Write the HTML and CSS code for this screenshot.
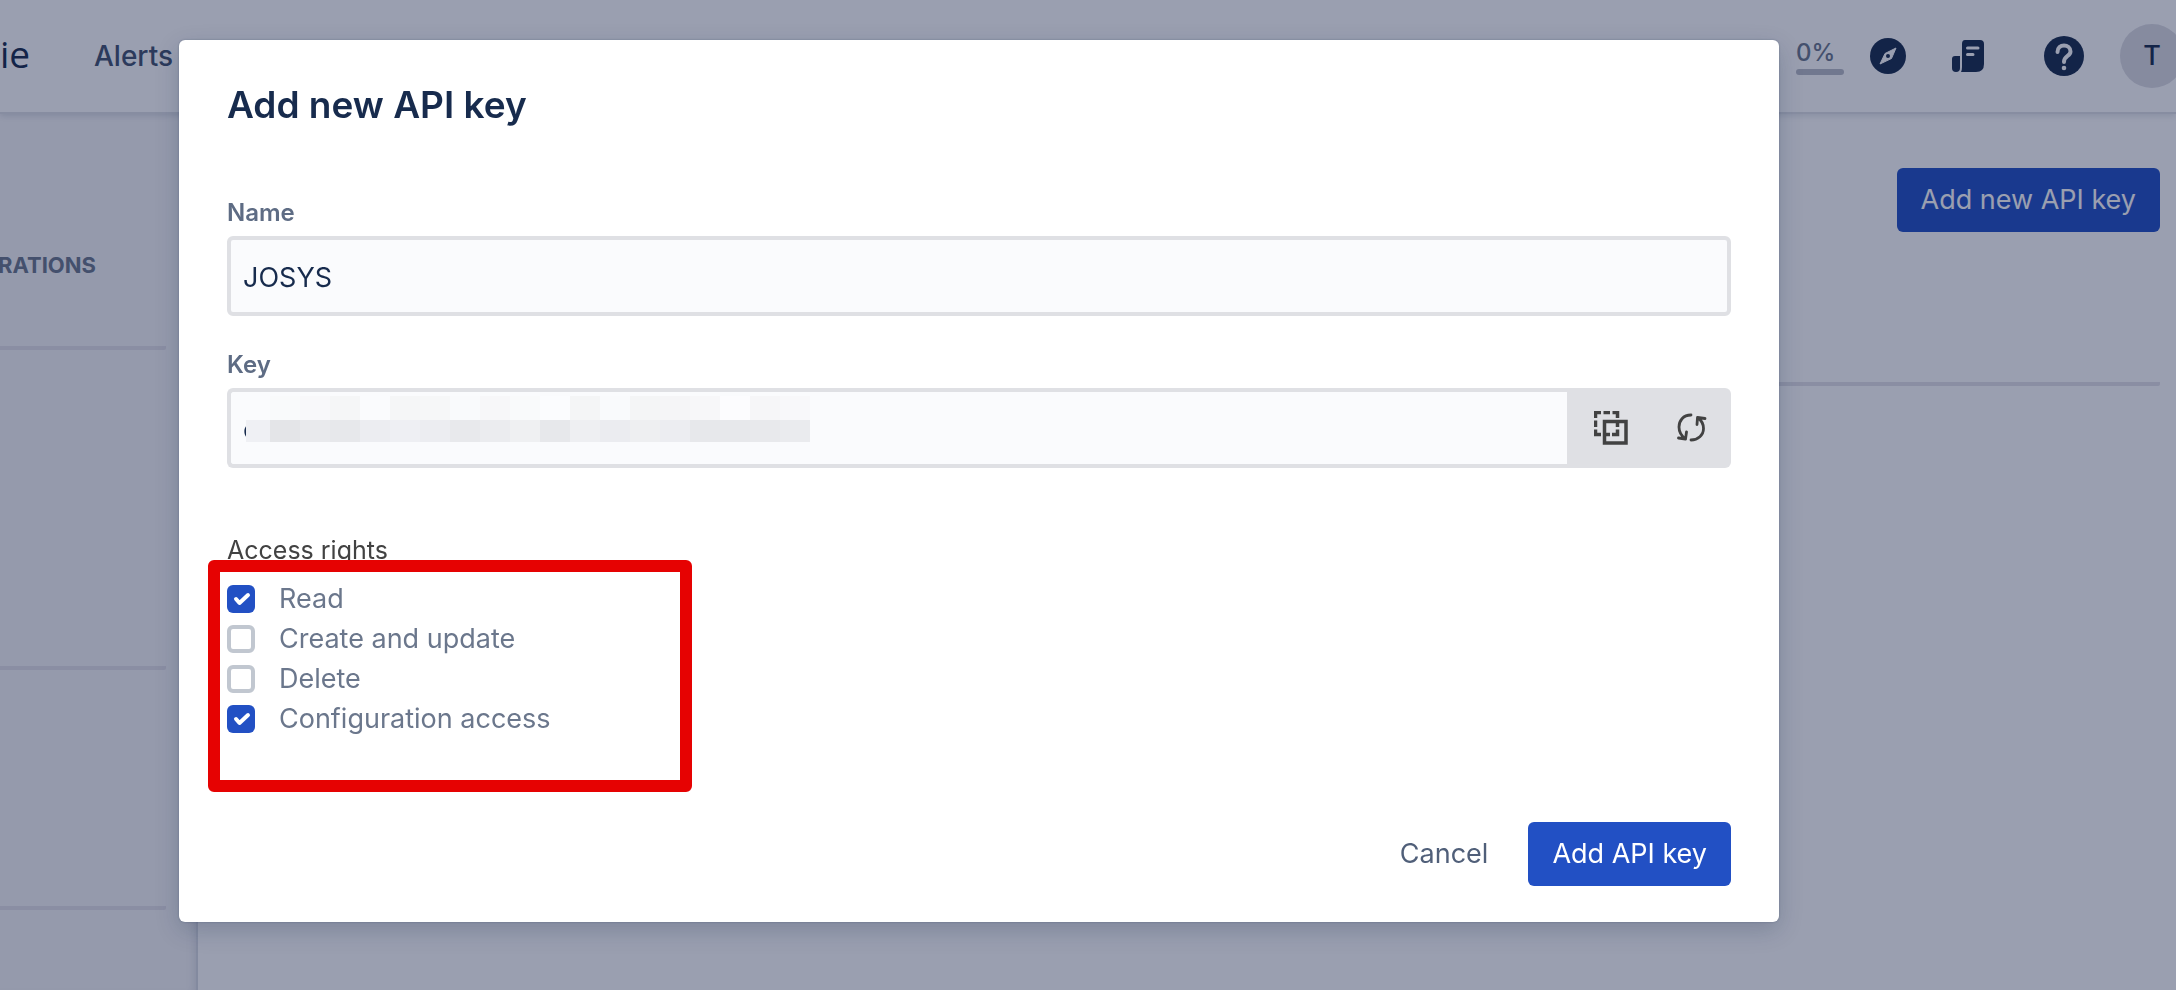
FILE: index.html
```html
<!DOCTYPE html>
<html lang="en">
<head>
    <meta charset="UTF-8">
    <meta name="viewport" content="width=device-width, initial-scale=1.0">
    <title>Add new API key</title>
    <link rel="stylesheet" href="styles.css">
</head>
<body>
    <!-- Top navigation -->
    <header class="header">
        <span class="logo">ie</span>
        <a href="#" class="nav-link">Alerts</a>
        <div class="header-actions">
            <div class="progress">
                <span class="progress-value">0%</span>
                <span class="progress-bar"></span>
            </div>
            <button class="icon-button" aria-label="Explore">
                <svg width="36" height="36" viewBox="0 0 36 36">
                    <circle cx="18" cy="18" r="18" fill="#172b4d"/>
                    <path d="M26 10 L21.5 20.5 L10 26 L15 15.5 Z" fill="#fff" stroke="#fff" stroke-width="1" stroke-linejoin="round"/>
                    <circle cx="18" cy="18" r="2" fill="#172b4d"/>
                </svg>
            </button>
            <button class="icon-button news" aria-label="What's new">
                <svg width="32" height="32" viewBox="0 0 32 32">
                    <path d="M13 0 H28 Q32 0 32 4 V24 Q32 32 24 32 H9 Q10 30 10 27 V4 Q10 0 13 0 Z" fill="#172b4d"/>
                    <path d="M3 16 H8 V28 Q8 32 4 32 Q0 32 0 28 V19 Q0 16 3 16 Z" fill="#172b4d"/>
                    <path d="M15.500 8 H26 M15.500 14.500 H21" stroke="#fff" stroke-width="3" stroke-linecap="round"/>
                </svg>
            </button>
            <button class="icon-button help" aria-label="Help">
                <svg width="40" height="40" viewBox="0 0 40 40" fill="none">
                    <circle cx="20" cy="20" r="20" fill="#172b4d"/>
                    <path d="M13.500 16 C13.500 7 26.500 7.500 26.500 15.500 C26.500 20.500 20 19.500 20 26" stroke="#fff" stroke-width="4" stroke-linecap="round"/>
                    <circle cx="20" cy="32" r="2.300" fill="#fff"/>
                </svg>
            </button>
            <button class="avatar">T</button>
        </div>
    </header>

    <div class="page">
        <aside class="sidebar">
            <div class="sidebar-section first">
                <h2 class="sidebar-title">RATIONS</h2>
            </div>
            <div class="sidebar-section second"></div>
            <div class="sidebar-section third"></div>
        </aside>
        <main class="content">
            <div class="content-header">
                <button class="button primary">Add new API key</button>
            </div>
        </main>
    </div>

    <!-- Add key dialog -->
    <div class="overlay">
        <form class="modal" role="dialog" aria-labelledby="modalTitle">
            <h1 id="modalTitle" class="modal-title">Add new API key</h1>

            <div class="field">
                <label class="field-label" for="name">Name</label>
                <input class="text-input" id="name" type="text" value="JOSYS">
            </div>

            <div class="field">
                <label class="field-label" for="key">Key</label>
                <div class="key-row">
                    <input class="text-input" id="key" type="text" value="c" readonly>
                    <svg class="key-mask" width="570" height="46" viewBox="0 0 570 46" shape-rendering="crispEdges" aria-hidden="true">
                        <g>
                            <rect x="30" width="30" height="24" fill="#f9fafb"/>
                            <rect x="60" width="30" height="24" fill="#f8f8fa"/>
                            <rect x="90" width="30" height="24" fill="#f5f6f7"/>
                            <rect x="150" width="30" height="24" fill="#f5f6f7"/>
                            <rect x="180" width="30" height="24" fill="#f6f7f8"/>
                            <rect x="210" width="30" height="24" fill="#f9fafc"/>
                            <rect x="240" width="30" height="24" fill="#f7f7f9"/>
                            <rect x="270" width="30" height="24" fill="#f9fafb"/>
                            <rect x="300" width="30" height="24" fill="#fbfcfe"/>
                            <rect x="330" width="30" height="24" fill="#f4f5f6"/>
                            <rect x="360" width="30" height="24" fill="#f9fafc"/>
                            <rect x="390" width="30" height="24" fill="#f4f5f6"/>
                            <rect x="420" width="30" height="24" fill="#f5f5f7"/>
                            <rect x="450" width="30" height="24" fill="#f7f7f9"/>
                            <rect x="480" width="30" height="24" fill="#fcfcfe"/>
                            <rect x="510" width="30" height="24" fill="#f6f6f8"/>
                            <rect x="540" width="30" height="24" fill="#f8f8fa"/>
                        </g>
                        <g transform="translate(0 24)">
                            <rect x="6" width="24" height="22" fill="#eff0f4"/>
                            <rect x="30" width="30" height="22" fill="#e4e5e8"/>
                            <rect x="60" width="30" height="22" fill="#e9eaed"/>
                            <rect x="90" width="30" height="22" fill="#e7e8eb"/>
                            <rect x="120" width="30" height="22" fill="#ecedf1"/>
                            <rect x="150" width="30" height="22" fill="#eeeff3"/>
                            <rect x="180" width="30" height="22" fill="#ecedf1"/>
                            <rect x="210" width="30" height="22" fill="#e8e9ec"/>
                            <rect x="240" width="30" height="22" fill="#ebecef"/>
                            <rect x="270" width="30" height="22" fill="#eff0f2"/>
                            <rect x="300" width="30" height="22" fill="#e7e8eb"/>
                            <rect x="330" width="30" height="22" fill="#eeeff2"/>
                            <rect x="360" width="30" height="22" fill="#ebecf0"/>
                            <rect x="390" width="30" height="22" fill="#eeeff1"/>
                            <rect x="420" width="30" height="22" fill="#ecedf1"/>
                            <rect x="450" width="60" height="22" fill="#e7e8eb"/>
                            <rect x="510" width="30" height="22" fill="#e8e9ec"/>
                            <rect x="540" width="30" height="22" fill="#eaebee"/>
                        </g>
                    </svg>
                    <div class="key-actions">
                        <button type="button" class="icon-button" aria-label="Copy key">
                            <svg width="34" height="34" viewBox="0 0 34 34" fill="none" stroke="#424242" stroke-width="3.500">
                                <path d="M1.500 7 V1.500 H7 M9.500 1.500 H16 M18.500 1.500 H23.500 V7 M1.500 9.500 V16 M1.500 18.500 V23.500 H7 M18 23.500 H23.500 V18.500 M11.500 23.500 H16 M23.500 10 V16"/>
                                <path d="M10.500 10.500 H32 V32 H10.500 Z"/>
                            </svg>
                        </button>
                        <button type="button" class="icon-button" aria-label="Regenerate key">
                            <svg width="30" height="30" viewBox="0 0 30 30" fill="none" stroke="#424242" stroke-width="2.800" stroke-linecap="round" stroke-linejoin="round">
                                <path d="M14 2 C6 2 2 8 2 14 C2 19 4.500 23 8.500 26 M1.500 25 L8.500 26 L9.500 19"/>
                                <path d="M14 27 C21 27 26.500 22 26.500 15.500 C26.500 11 24 7 20.500 4.500 M28 5.500 L20.500 4.500 L20 11.500"/>
                            </svg>
                        </button>
                    </div>
                </div>
            </div>

            <fieldset class="rights">
                <legend class="rights-title">Access rights</legend>
                <div class="highlight"></div>
                <label class="right"><input type="checkbox" class="checkbox" checked>Read</label>
                <label class="right"><input type="checkbox" class="checkbox">Create and update</label>
                <label class="right"><input type="checkbox" class="checkbox">Delete</label>
                <label class="right"><input type="checkbox" class="checkbox" checked>Configuration access</label>
            </fieldset>

            <div class="modal-footer">
                <button type="button" class="button subtle">Cancel</button>
                <button type="button" class="button primary">Add API key</button>
            </div>
        </form>
    </div>
</body>
</html>
```
FILE: styles.css
```css
* {
    box-sizing: border-box;
}

body {
    margin: 0;
    min-height: 100vh;
    display: flex;
    flex-direction: column;
    overflow: hidden;
    background-color: #fff;
    color: #172b4d;
    font-family: Inter, "Liberation Sans", sans-serif;
    font-size: 27px;
    line-height: 40px;
}

button,
input {
    font: inherit;
    color: inherit;
}

/* Header */
.header {
    position: relative;
    z-index: 1;
    display: flex;
    align-items: center;
    height: 114px;
    border-bottom: 2px solid #dfe1e6;
    background-color: #fff;
    box-shadow: 0 2px 6px rgba(9, 30, 66, 0.12);
}

.logo {
    width: 94px;
    padding-bottom: 4px;
    font-family: "Open Sans", "Noto Sans", sans-serif;
    font-size: 37px;
}

.nav-link {
    color: #42526e;
    font-size: 28px;
    font-weight: 500;
    text-decoration: none;
}

.header-actions {
    display: flex;
    align-items: center;
    margin-left: auto;
    margin-right: -8px; /* avatar runs off the edge */
}

.progress {
    display: flex;
    flex-direction: column;
    width: 48px;
    margin-right: 26px;
    color: #6b778c;
    font-size: 24px;
    font-weight: 500;
    line-height: 32px;
}

.progress-bar {
    height: 6px;
    border-radius: 3px;
    background-color: #b9bcc7;
}

.icon-button {
    display: flex;
    padding: 0;
    border: none;
    background: none;
    cursor: pointer;
}

.icon-button.news {
    margin-left: 46px;
}

.icon-button.help {
    margin-left: 60px;
}

.avatar {
    width: 64px;
    height: 64px;
    margin-left: 36px;
    padding: 0;
    border: none;
    border-radius: 50%;
    background-color: #dcdce2;
    font-weight: 500;
}

/* Page behind the dialog */
.page {
    flex: 1;
    display: flex;
}

.sidebar {
    width: 198px;
    padding-right: 30px;
    border-right: 2px solid #d8dbe2;
    background-color: #f6f6f8;
    box-shadow: inset -8px 0 8px -6px rgba(9, 30, 66, 0.1);
}

.sidebar-section {
    border-bottom: 4px solid #e3e2e8;
    border-radius: 0 0 2px 0;
}

.sidebar-section.first {
    height: 236px;
    padding-top: 135px;
}

.sidebar-section.second {
    height: 320px;
}

.sidebar-section.third {
    height: 240px;
}

.sidebar-title {
    display: flex;
    justify-content: flex-end;
    width: 96px;
    margin: 0;
    color: #6b778c;
    font-size: 22px;
    font-weight: 700;
    line-height: 32px;
}

.content {
    flex: 1;
    padding: 54px 16px;
}

.content-header {
    display: flex;
    justify-content: flex-end;
    padding-bottom: 150px;
    border-bottom: 4px solid #e3e2e8;
    border-radius: 2px;
}

/* Buttons */
.button {
    height: 64px;
    padding: 0 24px;
    border: none;
    border-radius: 6px;
    cursor: pointer;
}

.button.primary {
    background-color: #2250c4;
    color: #fff;
}

.button.subtle {
    background: none;
    color: #505f79;
}

/* Dialog */
.overlay {
    position: fixed;
    inset: 0;
    z-index: 10;
    padding: 40px 397px 68px 179px;
    background-color: rgba(15, 27, 66, 0.42);
}

.modal {
    padding: 40px 48px 36px;
    border-radius: 6px;
    background-color: #fff;
    box-shadow: 0 0 2px rgba(9, 30, 66, 0.3), 0 8px 24px rgba(9, 30, 66, 0.2);
}

.modal-title {
    margin: 0 0 67px;
    font-size: 37px;
    font-weight: 600;
    line-height: 50px;
}

.field {
    display: flex;
    flex-direction: column;
    gap: 7px;
    margin-bottom: 33px;
}

.field-label {
    color: #5e6c84;
    font-size: 24px;
    font-weight: 600;
    line-height: 32px;
}

.text-input {
    width: 100%;
    height: 80px;
    padding: 2px 12px 0;
    border: 4px solid #dfe0e4;
    border-radius: 6px;
    background-color: #fafbfd;
    outline: none;
}

.key-row {
    position: relative;
    display: flex;
}

.key-row .text-input {
    flex: 1;
    border-right: none;
    border-radius: 6px 0 0 6px;
}

/* Hides the key characters */
.key-mask {
    position: absolute;
    top: 8px;
    left: 13px;
}

.key-actions {
    display: flex;
    align-items: center;
    justify-content: space-between;
    width: 164px;
    padding: 0 24px 0 27px;
    border-radius: 0 6px 6px 0;
    background-color: #dfe0e4;
}

.rights {
    position: relative;
    margin: 66px 0 0;
    padding: 0;
    border: none;
}

.rights-title {
    margin-bottom: 13px;
    padding: 0;
    color: #424242;
    font-size: 25px;
    line-height: 32px;
}

.highlight {
    position: absolute;
    top: -19px;
    left: -19px;
    width: 484px;
    height: 232px;
    border: 12px solid #e60202;
    border-radius: 6px;
    pointer-events: none;
}

.right {
    display: flex;
    align-items: center;
    gap: 24px;
    color: #6b778c;
}

.checkbox {
    appearance: none;
    width: 28px;
    height: 28px;
    margin: 0;
    border: 4px solid #c1c7d0;
    border-radius: 6px;
    background-color: #fff;
}

.checkbox:checked {
    border: none;
    background: #2250c4 url("data:image/svg+xml,%3Csvg xmlns='http://www.w3.org/2000/svg' viewBox='0 0 28 28'%3E%3Cpath d='M9 14 L12.500 18 L21 10' fill='none' stroke='white' stroke-width='4' stroke-linecap='round' stroke-linejoin='round'/%3E%3C/svg%3E");
}

.modal-footer {
    display: flex;
    justify-content: flex-end;
    gap: 16px;
    margin-top: 83px;
}
```
